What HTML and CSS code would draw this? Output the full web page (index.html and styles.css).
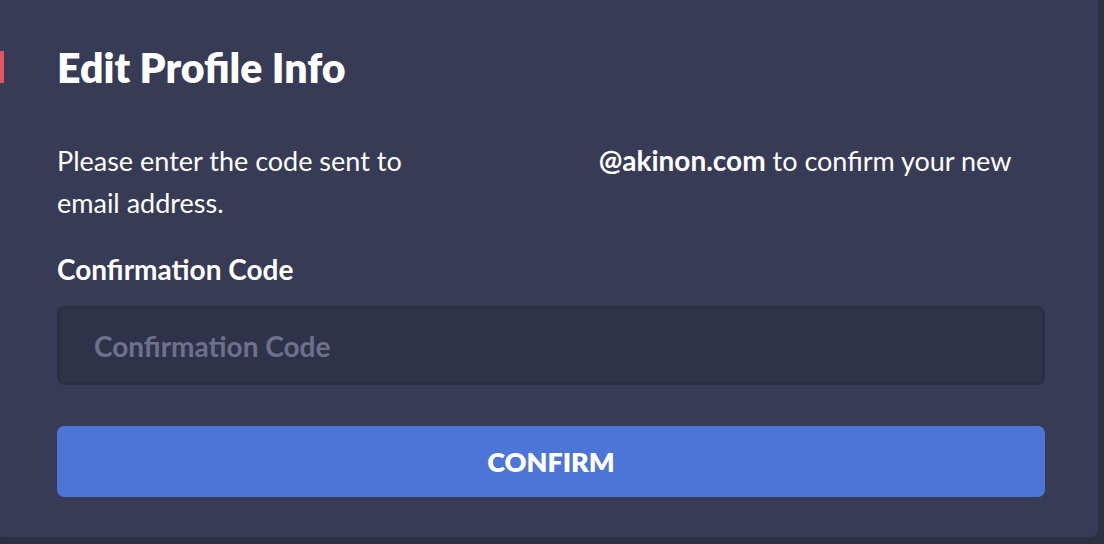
FILE: index.html
```html
<!DOCTYPE html>
<html lang="en">
<head>
  <meta charset="UTF-8" />
  <meta name="viewport" content="width=device-width, initial-scale=1.0"/>
  <title>Edit Profile Info</title>
  <link rel="stylesheet" href="styles.css">
</head>
<body>
  <div class="profile-card">
    <h1 class="card-title">Edit Profile Info</h1>
    <p class="card-text">
      Please enter the code sent to <span class="masked-email"></span><strong>@akinon.com</strong> to confirm your new email address.
    </p>
    <form class="code-form" onsubmit="return false;">
      <label for="code" class="field-label">Confirmation Code</label>
      <input id="code" type="text" class="field-input" placeholder="Confirmation Code" />
      <button type="submit" class="confirm-button">Confirm</button>
    </form>
  </div>
</body>
</html>
```

FILE: styles.css
```css
* { margin: 0; padding: 0; box-sizing: border-box; }
body {
  font-family: Lato, "Open Sans", sans-serif;
  background-color: #2c3043;
  color: #fff;
  overflow: hidden;
}
.profile-card {
  width: 1102px;
  margin-left: -4px;
  background-color: #373b55;
  border-radius: 0 0 8px 8px;
  padding: 44px 53px 40px 61px;
}
.card-title {
  position: relative;
  font-size: 41px;
  font-weight: 800;
  line-height: 48px;
  margin-bottom: 47px;
}
/* accent mark on the card edge */
.card-title::before {
  content: "";
  position: absolute;
  left: -61px;
  top: 7px;
  width: 8px;
  height: 32px;
  background-color: #e25563;
}
.card-text {
  font-size: 27px;
  line-height: 42px;
  margin-bottom: 28px;
}
.card-text strong { font-weight: 700; font-size: 28px; }
.masked-email { display: inline-block; width: 190px; }
.code-form { display: flex; flex-direction: column; }
.field-label {
  font-size: 28px;
  font-weight: 700;
  line-height: 34px;
  margin-bottom: 20px;
}
.field-input {
  height: 79px;
  background-color: #2f3349;
  border: 3px solid #2b2f44;
  border-radius: 8px;
  padding: 0 34px;
  font-family: inherit;
  font-size: 28px;
  font-weight: 700;
  color: #fff;
  outline: none;
  margin-bottom: 41px;
}
.field-input::placeholder { color: #6c728c; }
.confirm-button {
  height: 71px;
  background-color: #4d74d7;
  border: none;
  border-radius: 7px;
  color: #fff;
  font-family: inherit;
  font-size: 27px;
  font-weight: 800;
  text-transform: uppercase;
  cursor: pointer;
}
```
